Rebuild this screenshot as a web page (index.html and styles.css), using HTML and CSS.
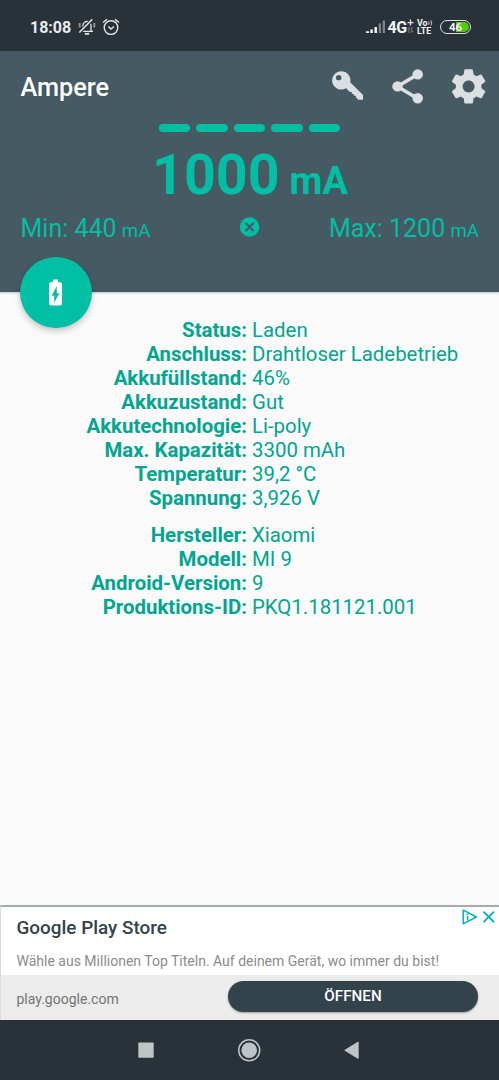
FILE: index.html
```html
<!DOCTYPE html>
<html lang="de">
<head>
<meta charset="utf-8">
<title>Ampere</title>
<link rel="stylesheet" href="styles.css">
</head>
<body>
<div class="screen">
  <div class="statusbar">
    <div class="status-left">
      <span class="clock">18:08</span>
      <svg class="mute" width="18" height="18" viewBox="0 0 18 18" fill="none" stroke="#e4e7e8" stroke-width="1.3">
        <path d="M5 12.8V7.5a4 4 0 0 1 8 0v5.3M3 13.3h12"/>
        <path d="M6.8 15.4q2.2 1 4.4 0" stroke-width="1.6"/>
        <path d="M1.7 5v4.5M16.3 5v4.5" stroke="#89949a" stroke-width="2"/>
        <path d="M1.3 14.7 14.3 1.4" stroke="#283238" stroke-width="3.6"/>
        <path d="M1.3 14.5 14.3 1.2" stroke-width="1.5"/>
      </svg>
      <svg class="alarm" width="18" height="18" viewBox="0 0 18 18" fill="none" stroke="#e4e7e8" stroke-width="1.4">
        <circle cx="9" cy="9.6" r="6.8"/>
        <path d="m6.4 8.5 2.6 2.6 3-2.7M1 4.5 5 1.4M17 4.5l-4-3.1"/>
      </svg>
    </div>
    <div class="status-right">
      <svg width="20" height="14" viewBox="0 0 20 14">
        <path fill="#f2f4f4" d="M0 11.3h3V13H0zM4.3 9.5h2.5V13H4.3zM8.5 7H11v6H8.5z"/>
        <path fill="#7d858a" d="M12.7 3.5H15V13h-2.3zM16.7.5H19V13h-2.3z"/>
      </svg>
      <span class="net">4G</span>
      <svg class="plus" width="7" height="15" viewBox="0 0 7 15" fill="none">
        <path d="M3.5 .6v6M.5 3.6h6" stroke="#e4e7e8" stroke-width="1.3"/>
        <path d="M2 14V8.5L.6 10M4.8 8v5.4L6.2 12" stroke="#7d858a" stroke-width="1"/>
      </svg>
      <div class="volte">
        <span>Vo<svg width="5" height="6" viewBox="0 0 5 6" fill="none" stroke="#c6cbcd"><path d="M.6 1.4q1.2 1.6 0 3.2M2.8.4q2 2.6 0 5.2"/></svg></span>
        <span>LTE</span>
      </div>
      <div class="battery"><span>46</span></div>
    </div>
  </div>

  <header class="header">
    <div class="toolbar">
      <h1>Ampere</h1>
      <svg width="160" height="40" viewBox="0 0 160 40" fill="#dcdfe1">
        <path transform="translate(.5 .1) scale(.94)" fill-rule="evenodd" d="M11.3 4.3a9.8 9.8 0 1 0 5.3 18.2l4 3.9h2.1v2.1h2.1v2.1h2.2v1.6l2.5 2.5h5.1v-5L21 16.1A9.8 9.8 0 0 0 11.3 4.3zM8.7 8.3a2.9 2.9 0 1 1 0 5.8 2.9 2.9 0 0 1 0-5.8z"/>
        <path d="M87.5 7.5l-20 12 20 12" fill="none" stroke="#dcdfe1" stroke-width="3.6"/>
        <circle cx="67.5" cy="19.4" r="5.2"/><circle cx="87.7" cy="7.4" r="5.2"/><circle cx="87.7" cy="31.3" r="5.2"/>
        <path transform="translate(118.1 -1.1) scale(1.71)" d="M19.43 12.98c.04-.32.07-.64.07-.98s-.03-.66-.07-.98l2.11-1.65c.19-.15.24-.42.12-.64l-2-3.46c-.12-.22-.39-.3-.61-.22l-2.49 1c-.52-.4-1.08-.73-1.69-.98l-.38-2.65C14.46 2.18 14.25 2 14 2h-4c-.25 0-.46.18-.49.42l-.38 2.65c-.61.25-1.17.59-1.69.98l-2.49-1c-.23-.09-.49 0-.61.22l-2 3.46c-.13.22-.07.49.12.64l2.11 1.65c-.04.32-.07.65-.07.98s.03.66.07.98l-2.11 1.65c-.19.15-.24.42-.12.64l2 3.46c.12.22.39.3.61.22l2.49-1c.52.4 1.08.73 1.69.98l.38 2.65c.03.24.24.42.49.42h4c.25 0 .46-.18.49-.42l.38-2.65c.61-.25 1.17-.59 1.69-.98l2.49 1c.23.09.49 0 .61-.22l2-3.46c.12-.22.07-.49-.12-.64l-2.11-1.65zM12 15.5c-1.93 0-3.5-1.57-3.5-3.5s1.57-3.5 3.5-3.5 3.5 1.57 3.5 3.5-1.57 3.5-3.5 3.5z"/>
      </svg>
    </div>
    <div class="bars"><i></i><i></i><i></i><i></i><i></i></div>
    <div class="reading">1000 <small>mA</small></div>
    <div class="range">
      <span class="min">Min: 440 <small>mA</small></span>
      <svg class="reset" width="20" height="20" viewBox="0 0 20 20"><circle cx="9.6" cy="10" r="9.7" fill="#00bfa5"/><path d="m5.6 6 8 8M13.6 6l-8 8" stroke="#465a64" stroke-width="2.1"/></svg>
      <span class="max">Max: 1200 <small>mA</small></span>
    </div>
    <div class="fab">
      <svg width="31" height="31" viewBox="0 0 24 24" fill="#fff"><path d="M15.67 4H14V2h-4v2H8.33C7.6 4 7 4.6 7 5.33v15.33C7 21.4 7.6 22 8.33 22h7.33c.74 0 1.34-.6 1.34-1.33V5.33C17 4.6 16.4 4 15.67 4zM11 20v-5.5H9L13 7v5.5h2L11 20z"/></svg>
    </div>
  </header>

  <main class="details">
    <dl>
      <dt>Status:</dt><dd>Laden</dd>
      <dt>Anschluss:</dt><dd>Drahtloser Ladebetrieb</dd>
      <dt>Akkufüllstand:</dt><dd>46%</dd>
      <dt>Akkuzustand:</dt><dd>Gut</dd>
      <dt>Akkutechnologie:</dt><dd>Li-poly</dd>
      <dt>Max. Kapazität:</dt><dd>3300 mAh</dd>
      <dt>Temperatur:</dt><dd>39,2 °C</dd>
      <dt>Spannung:</dt><dd>3,926 V</dd>
    </dl>
    <dl>
      <dt>Hersteller:</dt><dd>Xiaomi</dd>
      <dt>Modell:</dt><dd>MI 9</dd>
      <dt>Android-Version:</dt><dd>9</dd>
      <dt>Produktions-ID:</dt><dd>PKQ1.181121.001</dd>
    </dl>
  </main>

  <aside class="ad">
    <div class="ad-top">
      <div class="ad-title">Google Play Store</div>
      <div class="ad-text">Wähle aus Millionen Top Titeln. Auf deinem Gerät, wo immer du bist!</div>
      <svg class="ad-icons" width="34" height="16" viewBox="0 0 34 16" fill="none" stroke="#00aecd">
        <path d="M1.2 1.3v13.4l1.3-.6L14.3 8 2.5 1.7z" stroke-width="1.5" stroke-linejoin="round"/>
        <path d="M5.6 4.4v1.5M5.6 7v4.6" stroke-width="1.5"/>
        <path d="m21.5 2.7 10.5 10.5M32 2.7 21.5 13.2" stroke-width="1.8"/>
      </svg>
    </div>
    <div class="ad-bottom">
      <span class="ad-url">play.google.com</span>
      <span class="ad-button">ÖFFNEN</span>
    </div>
  </aside>

  <nav class="navbar">
    <svg width="230" height="24" viewBox="0 0 230 24" fill="#bfc4c6">
      <rect x="4.3" y="4.5" width="15.4" height="15.2" rx=".6"/>
      <circle cx="115.2" cy="12.3" r="7.8"/>
      <circle cx="115.2" cy="12.3" r="10.5" fill="none" stroke="#bfc4c6" stroke-width="1.5"/>
      <path d="M210.1 12.3 223.4 4q1.3-.5 1.3.8v15q0 1.2-1.3.7z"/>
    </svg>
  </nav>
</div>
</body>
</html>
```
FILE: styles.css
```css
* { box-sizing: border-box; }
body { margin: 0; font-family: Roboto, "Liberation Sans", sans-serif; }
.screen { width: 499px; height: 1080px; display: flex; flex-direction: column; background: #fafafa; overflow: hidden; }
svg { display: block; flex: none; }

.statusbar { height: 51px; flex: none; background: #283238; display: flex; justify-content: space-between; padding: 2px 28px 0 30px; color: #f2f4f4; }
.status-left, .status-right { display: flex; align-items: center; }
.clock { font-size: 16px; font-weight: 700; width: 41px; padding-top: 2px; color: #e9ecec; }
.mute { margin-left: 7px; }
.alarm { margin-left: 5.5px; }
.net { font-size: 16px; font-weight: 700; margin-left: 2px; width: 19.5px; padding-top: 1px; letter-spacing: -.5px; }
.volte { margin-left: 3px; width: 17px; font-size: 8.8px; font-weight: 700; display: flex; flex-direction: column; padding-top: 1px; }
.volte span { display: flex; align-items: center; white-space: nowrap; line-height: 8px; height: 8px; overflow: hidden; }
.battery { margin-left: 6px; width: 31px; height: 14px; border: 1.5px solid #dfe3e4; border-radius: 7px; background: linear-gradient(90deg, transparent 53%, #55c812 53%) content-box; padding: 1px; display: flex; align-items: center; justify-content: center; font-size: 11.5px; font-weight: 700; letter-spacing: -.2px; }

.header { height: 241px; flex: none; background: #465a64; color: #00bfa5; position: relative; box-shadow: 0 1px 2px rgba(0,0,0,.22); }
.toolbar { height: 73px; display: flex; align-items: center; justify-content: space-between; padding: 0 9.5px 1.5px 20.5px; }
.toolbar h1 { margin: 1px 0 0; font-size: 25.3px; font-weight: 500; color: #fff; }
.bars { display: flex; justify-content: center; gap: 5.7px; height: 8px; }
.bars i { width: 31.8px; border-radius: 4px; background: #00bfa5; }
.reading { margin-top: 10px; line-height: 66px; height: 66px; text-align: center; font-size: 55.6px; font-weight: 700; padding-left: 1px; white-space: nowrap; }
.reading small { font-size: 38px; margin-left: -4px; }
.range { height: 40px; margin-top: 6px; padding: 0 20px 0 20.5px; display: grid; grid-template-columns: 1fr 20px 1fr; font-size: 25px; line-height: 30px; white-space: nowrap; }
.range small { font-size: 18.7px; margin-left: -1px; }
.max { text-align: right; }
.reset { margin-top: 3px; }
.fab { position: absolute; left: 20px; top: 205.5px; width: 71.5px; height: 71.5px; border-radius: 50%; background: #00bfa5; display: flex; align-items: center; justify-content: center; box-shadow: 0 3px 6px rgba(0,0,0,.22); }

.details { flex: 1; padding-top: 26px; color: #00a68f; }
dl { margin: 0 0 13px; display: grid; grid-template-columns: 247px 1fr; column-gap: 5px; font-size: 20.4px; line-height: 24px; white-space: nowrap; }
dt { font-weight: 700; text-align: right; }
dd { margin: 0; }

.ad { height: 115px; flex: none; border-top: 2px solid #a5acac; border-left: 1px solid #dcdcdc; background: #fff; display: flex; flex-direction: column; }
.ad-top { height: 68px; padding: 10px 0 0 15.5px; position: relative; white-space: nowrap; }
.ad-title { font-size: 18.9px; font-weight: 500; line-height: 22px; color: #33434c; }
.ad-text { margin-top: 12px; font-size: 14px; line-height: 20px; color: #8c8c8c; }
.ad-icons { position: absolute; right: 3px; top: 2px; }
.ad-bottom { flex: 1; background: #ececec; display: flex; justify-content: space-between; align-items: center; padding: 0 21px 0 15.5px; }
.ad-url { font-size: 14px; color: #747474; padding-top: 3px; }
.ad-button { width: 250px; height: 31px; margin-bottom: 3px; border-radius: 16px; background: #33434c; color: #fff; font-size: 15.2px; font-weight: 500; line-height: 31px; text-align: center; box-shadow: 0 1px 2px rgba(0,0,0,.35); }

.navbar { height: 60px; flex: none; background: #283238; display: flex; align-items: center; padding-left: 134px; }
```
